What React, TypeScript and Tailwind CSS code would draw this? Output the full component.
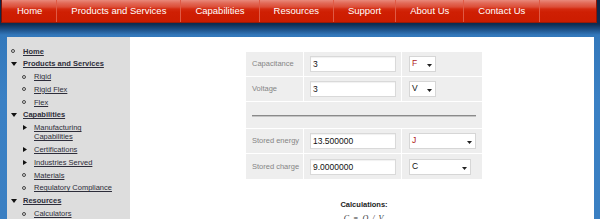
import React from "react";

type Marker = "circle" | "down" | "right";
type Item = { label: string; level: 0 | 1; marker: Marker; bold?: boolean };

const items: Item[] = [
  { label: "Home", level: 0, marker: "circle", bold: true },
  { label: "Products and Services", level: 0, marker: "down", bold: true },
  { label: "Rigid", level: 1, marker: "circle" },
  { label: "Rigid Flex", level: 1, marker: "circle" },
  { label: "Flex", level: 1, marker: "circle" },
  { label: "Capabilities", level: 0, marker: "down", bold: true },
  { label: "Manufacturing Capabilities", level: 1, marker: "right" },
  { label: "Certifications", level: 1, marker: "right" },
  { label: "Industries Served", level: 1, marker: "right" },
  { label: "Materials", level: 1, marker: "circle" },
  { label: "Regulatory Compliance", level: 1, marker: "circle" },
  { label: "Resources", level: 0, marker: "down", bold: true },
  { label: "Calculators", level: 1, marker: "circle" },
];

const navItems = ["Home", "Products and Services", "Capabilities", "Resources", "Support", "About Us", "Contact Us"];

function MarkerIcon({ m }: { m: Marker }) {
  if (m === "circle")
    return <span className="block w-[4px] h-[4px] rounded-full border border-[#444] mt-[2.5px]" />;
  if (m === "down")
    return (
      <svg width="6" height="4" viewBox="0 0 6 4" className="mt-[2.5px]">
        <path d="M0 0 L6 0 L3 4 Z" fill="#111" />
      </svg>
    );
  return (
    <svg width="4" height="5" viewBox="0 0 4 5" className="mt-[2px] ml-[1px]">
      <path d="M0 0 L4 2.5 L0 5 Z" fill="#111" />
    </svg>
  );
}

function Select({ value, width, red }: { value: string; width: string; red?: boolean }) {
  return (
    <div
      className={`${width} h-[16px] bg-white border border-[#d6d6d6] flex items-start justify-between pl-[2px] pr-[3px] pt-[1px]`}
    >
      <span className={`text-[8.5px] leading-[10px] ${red ? "text-[#b0201a]" : "text-[#111]"}`}>{value}</span>
      <svg width="5" height="3" viewBox="0 0 5 3" className="mt-[6px]">
        <path d="M0 0 L5 0 L2.5 3 Z" fill="#222" />
      </svg>
    </div>
  );
}

function Input({ value }: { value: string }) {
  return (
    <div className="w-[86px] h-[16px] bg-white border border-[#d9d9d9] shadow-[inset_0_1px_1px_rgba(0,0,0,0.06)] flex items-center pl-[2px]">
      <span className="text-[8.5px] leading-[10px] text-[#111]">{value}</span>
    </div>
  );
}

export default function App() {
  const cell = "bg-[#eeeeee] flex items-center";
  return (
    <div className="w-[600px] h-[219px] overflow-hidden flex flex-col font-['Liberation_Sans',Arial,sans-serif] bg-[linear-gradient(to_bottom,#0b2646_0px,#0e2d52_24px,#1c4d82_29px,#3378bb_35px,#3a80c4_100px,#3a7fc2_219px)]">
      <nav className="shrink-0 h-[23px] w-[596px] ml-[1px] flex border-l border-[#7a1305] border-b border-b-[#9a1a08] border-r border-r-[#8e1606] bg-[linear-gradient(to_bottom,#e98a7c_0px,#e26a58_3px,#dc4d37_7px,#d42a0f_9px,#cf1f03_12px,#cc1c00_22px)]">
        <div className="w-[1px]" />
        {navItems.map((n) => (
          <div
            key={n}
            className="flex items-center px-[14px] border-r border-[#df5a45] text-white text-[9.5px] leading-[11px] pb-[1px]"
          >
            {n}
          </div>
        ))}
      </nav>
      <div className="shrink-0 pt-[14px] pl-[7px] flex">
        <div className="w-[587px] h-[200px] flex bg-white">
          <aside className="w-[123px] shrink-0 bg-[#dddddd] pt-[9.5px] pl-[4px] pr-[10px] flex flex-col gap-[3.8px]">
            {items.map((it) => (
              <div key={it.label} className={`flex items-start ${it.level === 1 ? "pl-[11px]" : ""}`}>
                <div className="w-[12px] shrink-0 flex">
                  <MarkerIcon m={it.marker} />
                </div>
                <span
                  className={`text-[7.5px] leading-[9px] underline text-[#2d2d3a] ${it.bold ? "font-bold" : ""}`}
                >
                  {it.label}
                </span>
              </div>
            ))}
          </aside>
          <section className="flex-1 flex flex-col items-center pt-[15px] pl-[4px]">
            <div className="grid grid-cols-[57px_97px_80px] grid-rows-[24px_24px_26px_24px_25px] gap-[1px] bg-white">
              <div className={`${cell} pl-[6px] text-[7.5px] text-[#858585]`}>Capacitance</div>
              <div className={`${cell} pl-[6px]`}>
                <Input value="3" />
              </div>
              <div className={`${cell} pl-[7px]`}>
                <Select value="F" width="w-[27px]" red />
              </div>
              <div className={`${cell} pl-[6px] text-[7.5px] text-[#858585]`}>Voltage</div>
              <div className={`${cell} pl-[6px]`}>
                <Input value="3" />
              </div>
              <div className={`${cell} pl-[7px]`}>
                <Select value="V" width="w-[27px]" />
              </div>
              <div className={`${cell} col-span-3 px-[6px]`}>
                <div className="w-full h-[2px] border-t border-[#8a8a8a] border-b border-b-[#c4c4c4] mt-[2px]" />
              </div>
              <div className={`${cell} pl-[6px] text-[7.5px] text-[#858585]`}>Stored energy</div>
              <div className={`${cell} pl-[6px]`}>
                <Input value="13.500000" />
              </div>
              <div className={`${cell} pl-[7px]`}>
                <Select value="J" width="w-[67px]" red />
              </div>
              <div className={`${cell} pl-[6px] text-[7.5px] text-[#858585]`}>Stored charge</div>
              <div className={`${cell} pl-[6px]`}>
                <Input value="9.0000000" />
              </div>
              <div className={`${cell} pl-[7px]`}>
                <Select value="C" width="w-[62px]" />
              </div>
            </div>
            <div className="mt-[21px] text-[7.5px] leading-[10px] font-bold text-[#222]">Calculations:</div>
            <div className="mt-[4px] text-[8px] leading-[10px] italic font-['Liberation_Serif',serif] text-[#333] tracking-[1px]">
              C = Q / V
            </div>
          </section>
        </div>
      </div>
    </div>
  );
}
